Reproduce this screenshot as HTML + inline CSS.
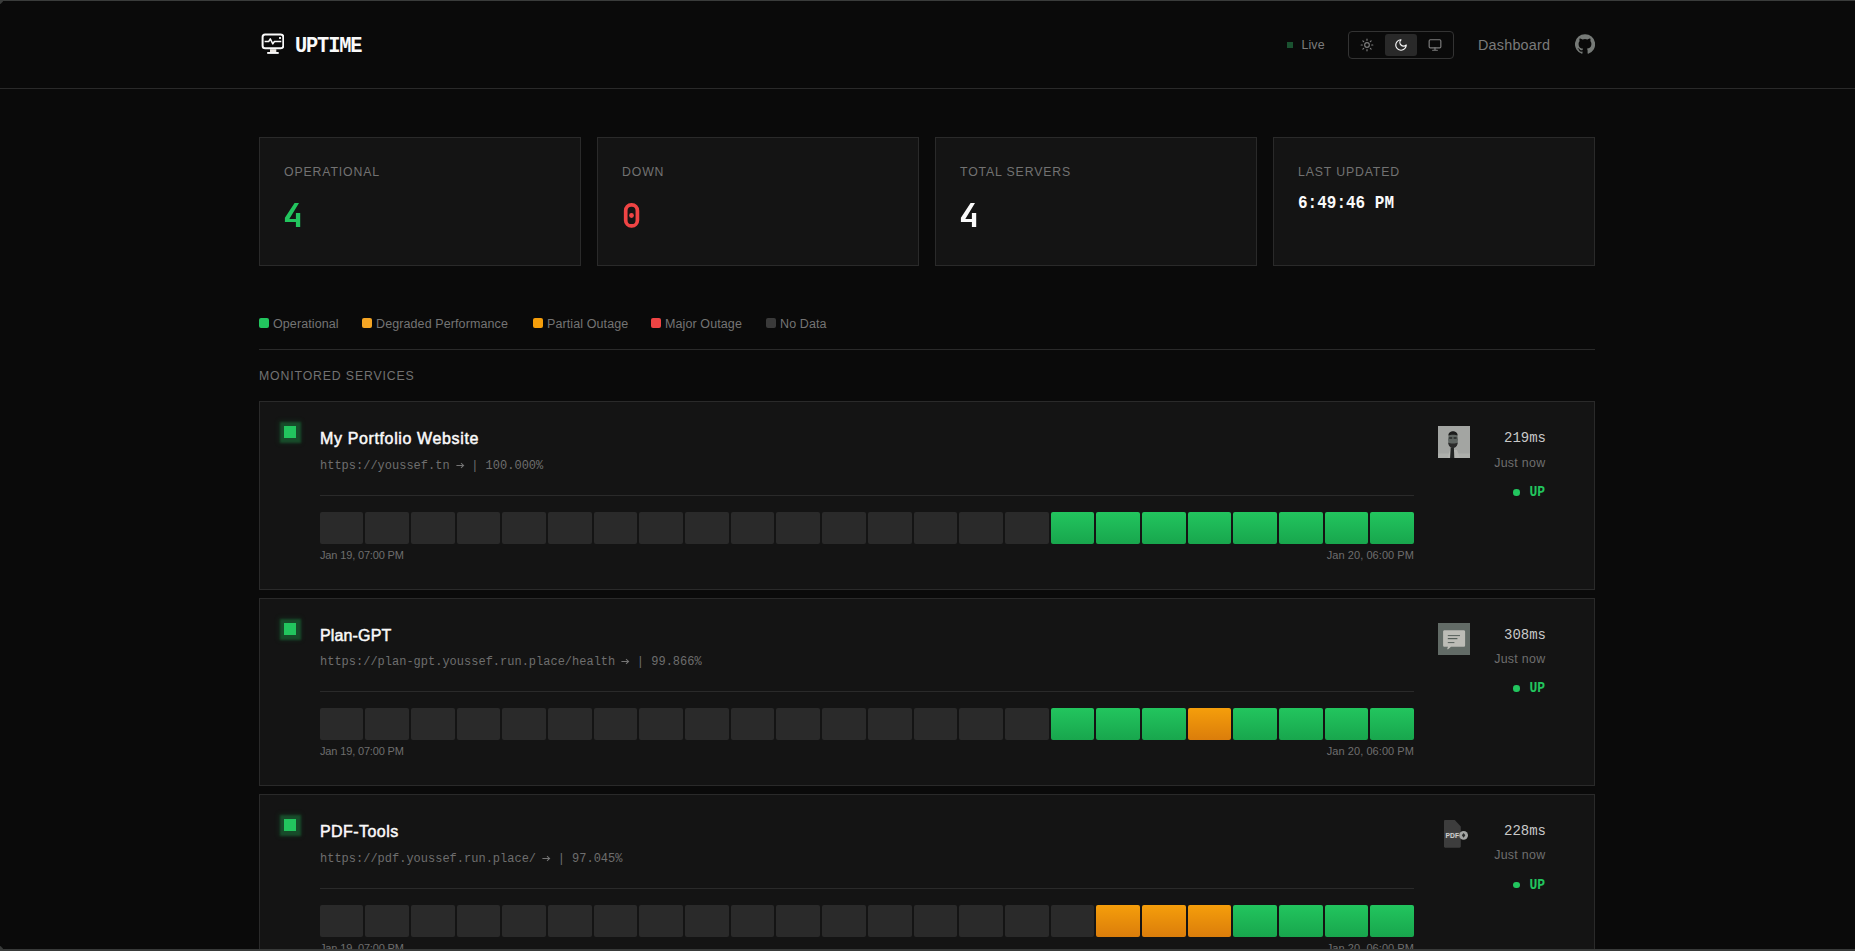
<!DOCTYPE html>
<html lang="en">
<head>
<meta charset="utf-8">
<title>Uptime</title>
<style>
*{box-sizing:border-box;margin:0;padding:0}
html,body{width:1855px;height:951px;overflow:hidden;background:#0a0a0a;color:#fafafa;font-family:"Liberation Sans",sans-serif}
body{position:relative}
.mono{font-family:"Liberation Mono",monospace}
.abs{position:absolute;white-space:nowrap;line-height:1}
.frame-top{position:absolute;left:0;top:0;width:1855px;height:1px;background:#3a3c3b;z-index:10}
.frame-bot{position:absolute;left:0;top:949px;width:1855px;height:2px;background:#383a39;z-index:10}
.hdr-line{position:absolute;left:0;top:88px;width:1855px;height:1px;background:#2a2a2a}
/* header */
.logo-ico{position:absolute;left:260px;top:32px;width:24px;height:24px}
.logo-txt{left:295px;top:34.8px;font-size:21px;font-weight:bold;color:#fafafa;letter-spacing:-1.2px;transform:scale(.97,1.09);transform-origin:0 0}
.live-dot{position:absolute;left:1287px;top:42px;width:6px;height:6px;background:#1a5230}
.live-txt{left:1301.5px;top:39px;font-size:12.4px;color:#7c7c7c;letter-spacing:.1px}
.theme{position:absolute;left:1348px;top:31px;width:106px;height:28px;border:1px solid #333;border-radius:4px}
.theme .act{position:absolute;left:36px;top:2px;width:32px;height:22px;background:#292929;border-radius:3px}
.theme svg{position:absolute;top:6px;width:14px;height:14px}
.dash{left:1478px;top:37.5px;font-size:14.4px;color:#7a7a7a;letter-spacing:.2px}
.gh{position:absolute;left:1575px;top:34px;width:20px;height:20px}
/* stat cards */
.stat{position:absolute;top:137px;width:322px;height:129px;background:#141414;border:1px solid #2a2a2a}
.stat .lbl{left:24px;top:28px;font-size:12.3px;letter-spacing:.85px;color:#727272}
.numsvg{position:absolute;left:0;top:0;width:322px;height:129px}
.stat .num{left:24px;top:62px;font-size:34px;font-weight:bold}
/* legend */
.lg{position:absolute;top:318px;height:10px}
.lg i{position:absolute;left:0;top:0;width:10px;height:10px;border-radius:2px}
.lg span{position:absolute;left:14px;top:-.5px;font-size:12.5px;letter-spacing:.1px;color:#747474;white-space:nowrap;line-height:1}
.sep{position:absolute;left:259px;top:349px;width:1336px;height:1px;background:#2a2a2a}
.mon{left:259px;top:370px;font-size:12.3px;letter-spacing:.85px;color:#727272}
/* service cards */
.svc{position:absolute;left:259px;width:1336px;height:189px;background:#141414;border:1px solid #2a2a2a}
.svc .st{position:absolute;left:24px;top:24px;width:12px;height:12px;background:#22c55e;box-shadow:0 0 2px 4.5px rgba(34,197,94,.27),0 0 5px 6px rgba(34,197,94,.08)}
.svc .ttl{left:60px;top:29px;font-size:16px;font-weight:normal;color:#fafafa;-webkit-text-stroke:.5px #fafafa;letter-spacing:.5px}
.svc .url{left:60px;top:57.2px;font-size:12px;color:#6e6e6e;transform:scaleY(1.06);transform-origin:0 0}
.arw{width:7.2px;height:8px;overflow:visible;vertical-align:baseline}
.svc .ln{position:absolute;left:60px;top:93px;width:1094px;height:1px;background:#2a2a2a}
.bars{position:absolute;left:59.6px;top:110px;width:1094.56px;height:32px;display:flex;gap:2px}
.bars b{flex:1 1 0;height:32px;border-radius:2px;background:#2a2a2a}
.bars b.g{background:linear-gradient(180deg,#22c55e,#18a64d)}
.bars b.o{background:linear-gradient(180deg,#f59e0b,#db7d0b)}
.svc .d1{left:60px;top:148px;font-size:11px;letter-spacing:-.15px;color:#6e6e6e}
.svc .d2{right:180px;top:148px;font-size:11px;letter-spacing:.06px;color:#6e6e6e}
.svc .av{position:absolute;left:1178px;top:24px;width:32px;height:32px}
.svc .ms{right:48px;top:29px;font-size:14px;color:#c8c8c8;transform:scaleY(1.07);transform-origin:0 85%}
.svc .jn{right:48.5px;top:55px;font-size:12.4px;letter-spacing:.3px;color:#6e6e6e}
.svc .up{right:49px;top:83px;font-size:13px;font-weight:bold;color:#22c55e;transform:scaleY(1.12);transform-origin:100% 0}
.c2 .url,.c2 .ln,.c2 .bars,.c2 .d1,.c2 .d2,.c2 .jn,.c2 .up,.c2 .dot{margin-top:-1px}
.c3 .jn{margin-top:-1px}.c3 .dot{margin-top:-.5px}
.svc .dot{position:absolute;left:1253.2px;top:87px;width:6.5px;height:6.500px;border-radius:50%;background:#22c55e}
</style>
</head>
<body>
<div class="frame-top"></div><div style="position:absolute;left:0;top:1px;width:3px;height:3px;background:linear-gradient(135deg,#3a3c3b 45%,rgba(58,60,59,0) 70%);z-index:10"></div><div style="position:absolute;left:0;top:946px;width:3px;height:3px;background:linear-gradient(45deg,#383a39 45%,rgba(56,58,57,0) 70%);z-index:10"></div>
<div class="hdr-line"></div>

<!-- HEADER -->
<svg class="logo-ico" viewBox="0 0 24 24" fill="none" stroke="#fafafa" stroke-width="2" stroke-linejoin="round"><rect x="2.600" y="2.400" width="20.700" height="13.800" rx="2.500"/><path d="M4.600 9.500H8.700L10.300 6.900L12.800 11.900L14.400 9.500H21.300" stroke-width="1.500"/><rect x="10" y="17.200" width="6.300" height="2.800" fill="#ede8e2" stroke="none"/><rect x="7.200" y="20" width="11.500" height="1.900" fill="#fafafa" stroke="none"/><rect x="19.100" y="5" width="1.800" height="2" fill="#fafafa" stroke="none"/></svg>
<div class="abs mono logo-txt">UPTIME</div>

<div class="live-dot"></div>
<div class="abs live-txt">Live</div>

<div class="theme">
  <div class="act"></div>
  <svg style="left:11px" viewBox="0 0 24 24" fill="none" stroke="#7e7e7e" stroke-width="2" stroke-linecap="round" stroke-linejoin="round"><circle cx="12" cy="12" r="4"/><path d="M12 2v2M12 20v2M4.93 4.93l1.41 1.41M17.66 17.66l1.41 1.41M2 12h2M20 12h2M4.93 19.07l1.41-1.41M17.66 6.34l1.41-1.41"/></svg>
  <svg style="left:45px" viewBox="0 0 24 24" fill="none" stroke="#fafafa" stroke-width="2" stroke-linecap="round" stroke-linejoin="round"><path d="M12 3a6 6 0 0 0 9 9 9 9 0 1 1-9-9Z"/></svg>
  <svg style="left:79px" viewBox="0 0 24 24" fill="none" stroke="#7e7e7e" stroke-width="2" stroke-linecap="round" stroke-linejoin="round"><rect x="2" y="3" width="20" height="14" rx="2"/><path d="M8 21h8M12 17v4"/></svg>
</div>

<div class="abs dash">Dashboard</div>
<svg class="gh" viewBox="0 0 24 24" fill="#767a77"><path d="M12 .3a12 12 0 0 0-3.8 23.4c.6.1.8-.3.8-.6v-2c-3.3.7-4-1.6-4-1.6-.6-1.4-1.4-1.8-1.4-1.8-1-.7.1-.7.1-.7 1.2 0 1.900 1.200 1.900 1.200 1 1.800 2.800 1.300 3.500 1 0-.8.400-1.300.700-1.600-2.700-.300-5.500-1.300-5.500-6 0-1.200.5-2.300 1.300-3.100-.200-.400-.600-1.600 0-3.200 0 0 1-.300 3.400 1.200a11.500 11.500 0 0 1 6 0c2.300-1.500 3.300-1.200 3.300-1.200.700 1.600.200 2.800.100 3.200.8.800 1.300 1.900 1.300 3.200 0 4.600-2.800 5.600-5.500 5.900.5.400.9 1 .9 2.200v3.300c0 .3.100.7.800.6A12 12 0 0 0 12 .3"/></svg>

<!-- STATS -->
<div class="stat" style="left:259px"><div class="abs lbl">OPERATIONAL</div><svg class="numsvg" viewBox="0 0 322 129" fill="#22c55e"><path d="M34.6 65L39 65L29.3 81L35.9 81L35.9 75.1L40.2 75.1L40.2 89L35.9 89L35.9 84.1L24.9 84.1L24.9 79.7Z"/></svg></div>
<div class="stat" style="left:597px"><div class="abs lbl">DOWN</div><svg class="numsvg" viewBox="0 0 322 129" fill="none" stroke="#ef4444" stroke-width="3.7"><rect x="27.700" y="66.950" width="11.700" height="21" rx="5.600" ry="5.800"/><circle cx="33.5" cy="77.5" r="2.4" fill="#ef4444" stroke="none"/></svg></div>
<div class="stat" style="left:935px"><div class="abs lbl">TOTAL SERVERS</div><svg class="numsvg" viewBox="0 0 322 129" fill="#fafafa"><path d="M34.6 65L39 65L29.3 81L35.9 81L35.9 75.1L40.2 75.1L40.2 89L35.9 89L35.9 84.1L24.9 84.1L24.9 79.7Z"/></svg></div>
<div class="stat" style="left:1273px"><div class="abs lbl">LAST UPDATED</div><div class="abs mono num" style="color:#fafafa;font-size:16px;top:56.3px;transform:scaleY(1.17);transform-origin:0 0">6:49:46 PM</div></div>

<!-- LEGEND -->
<div class="lg" style="left:259px"><i style="background:#22c55e"></i><span>Operational</span></div>
<div class="lg" style="left:362px"><i style="background:#f5a524"></i><span>Degraded Performance</span></div>
<div class="lg" style="left:533px"><i style="background:#f59e0b"></i><span>Partial Outage</span></div>
<div class="lg" style="left:651px"><i style="background:#ef4444"></i><span>Major Outage</span></div>
<div class="lg" style="left:766px"><i style="background:#3a3a3a"></i><span>No Data</span></div>
<div class="sep"></div>
<div class="abs mon">MONITORED SERVICES</div>

<!-- SERVICES -->
<div class="svc" style="top:401px">
  <div class="st"></div>
  <div class="abs ttl" style="letter-spacing:.63px">My Portfolio Website</div>
  <div class="abs mono url">https://youssef.tn <svg class="arw" viewBox="0 0 7.2 8"><path d="M-.6 5.100H6.200M4 2.900L6.600 5.100L4 7.300" fill="none" stroke="#757575" stroke-width="1"/></svg> | 100.000%</div>
  <div class="ln"></div>
  <div class="bars"><b></b><b></b><b></b><b></b><b></b><b></b><b></b><b></b><b></b><b></b><b></b><b></b><b></b><b></b><b></b><b></b><b class="g"></b><b class="g"></b><b class="g"></b><b class="g"></b><b class="g"></b><b class="g"></b><b class="g"></b><b class="g"></b></div>
  <div class="abs d1">Jan 19, 07:00 PM</div><div class="abs d2">Jan 20, 06:00 PM</div>
  <svg class="av" viewBox="0 0 32 32"><rect width="32" height="32" fill="#a3a5a2"/><rect y="27.5" width="32" height="4.5" fill="#adafab"/><path d="M9.5 32 L12 24 L19 24 L22 32Z" fill="#b4b5b1"/><ellipse cx="15" cy="13.6" rx="5" ry="8.2" fill="#5e6461"/><path d="M10.200 9.400C10.600 6.600 12.600 5.200 15 5.200C17.400 5.200 19.400 6.600 19.800 9.400C18 8.500 12 8.500 10.200 9.400Z" fill="#1c1c1c"/><rect x="11.200" y="11.200" width="3" height="1.600" fill="#2a2c2b"/><rect x="15.600" y="11.200" width="3" height="1.600" fill="#2a2c2b"/><path d="M10.300 16.500c1.500 1.300 7.700 1.300 9.300 0 .2 3-1.800 5.400-4.600 5.400s-4.900-2.400-4.700-5.400z" fill="#2b2b2b"/><path d="M12.700 21.600L15.900 21.600L16.300 32L12.100 32Z" fill="#232524"/></svg>
  <div class="abs mono ms">219ms</div><div class="abs jn">Just now</div><div class="dot"></div><div class="abs mono up">UP</div>
</div>

<div class="svc c2" style="top:598px;height:188px">
  <div class="st"></div>
  <div class="abs ttl" style="letter-spacing:.14px">Plan-GPT</div>
  <div class="abs mono url">https://plan-gpt.youssef.run.place/health <svg class="arw" viewBox="0 0 7.2 8"><path d="M-.6 5.100H6.200M4 2.900L6.600 5.100L4 7.300" fill="none" stroke="#757575" stroke-width="1"/></svg> | 99.866%</div>
  <div class="ln"></div>
  <div class="bars"><b></b><b></b><b></b><b></b><b></b><b></b><b></b><b></b><b></b><b></b><b></b><b></b><b></b><b></b><b></b><b></b><b class="g"></b><b class="g"></b><b class="g"></b><b class="o"></b><b class="g"></b><b class="g"></b><b class="g"></b><b class="g"></b></div>
  <div class="abs d1">Jan 19, 07:00 PM</div><div class="abs d2">Jan 20, 06:00 PM</div>
  <svg class="av" viewBox="0 0 32 32"><rect width="32" height="32" fill="#626b66"/><path d="M6.500 7.200h19.200c.8 0 1.400.6 1.400 1.400v13.800c0 .8-.6 1.400-1.400 1.400H13l-3.200 2.600-.6-.6.800-2H6.500c-.8 0-1.400-.6-1.400-1.400V8.600c0-.8.600-1.400 1.400-1.400z" fill="#bcbcb6"/><rect x="9.800" y="12" width="12.200" height="1.100" fill="#5f6863"/><rect x="9.800" y="15" width="9.600" height="1.200" fill="#555e59"/><rect x="9.800" y="19" width="6.600" height="1.100" fill="#5f6863"/></svg>
  <div class="abs mono ms">308ms</div><div class="abs jn">Just now</div><div class="dot"></div><div class="abs mono up">UP</div>
</div>

<div class="svc c3" style="top:794px">
  <div class="st"></div>
  <div class="abs ttl" style="letter-spacing:.44px">PDF-Tools</div>
  <div class="abs mono url">https://pdf.youssef.run.place/ <svg class="arw" viewBox="0 0 7.2 8"><path d="M-.6 5.100H6.200M4 2.900L6.600 5.100L4 7.300" fill="none" stroke="#757575" stroke-width="1"/></svg> | 97.045%</div>
  <div class="ln"></div>
  <div class="bars"><b></b><b></b><b></b><b></b><b></b><b></b><b></b><b></b><b></b><b></b><b></b><b></b><b></b><b></b><b></b><b></b><b></b><b class="o"></b><b class="o"></b><b class="o"></b><b class="g"></b><b class="g"></b><b class="g"></b><b class="g"></b></div>
  <div class="abs d1">Jan 19, 07:00 PM</div><div class="abs d2">Jan 20, 06:00 PM</div>
  <svg class="av" viewBox="0 -1 32 32"><path d="M7.200 0h9.600l6 6.400v20.200c0 .7-.5 1.200-1.200 1.200H7.200c-.7 0-1.200-.5-1.200-1.200V1.200C6 .5 6.500 0 7.200 0z" fill="#3d3d3d"/><rect x="7.600" y="12.600" width="14.500" height="5.500" fill="#4a4a4a"/><text x="7.600" y="17.800" font-family="Liberation Sans, sans-serif" font-weight="bold" font-size="6.600" fill="#cfcfcf" textLength="13.400" lengthAdjust="spacingAndGlyphs">PDF</text><circle cx="25.600" cy="15.300" r="4.400" fill="#a2a4a2"/><path d="M25.600 12.900l1.700 2.400-1.700 2.400-1.700-2.400z" fill="#2a2c2b"/></svg>
  <div class="abs mono ms">228ms</div><div class="abs jn">Just now</div><div class="dot"></div><div class="abs mono up">UP</div>
</div>

<div class="frame-bot"></div>
</body>
</html>
